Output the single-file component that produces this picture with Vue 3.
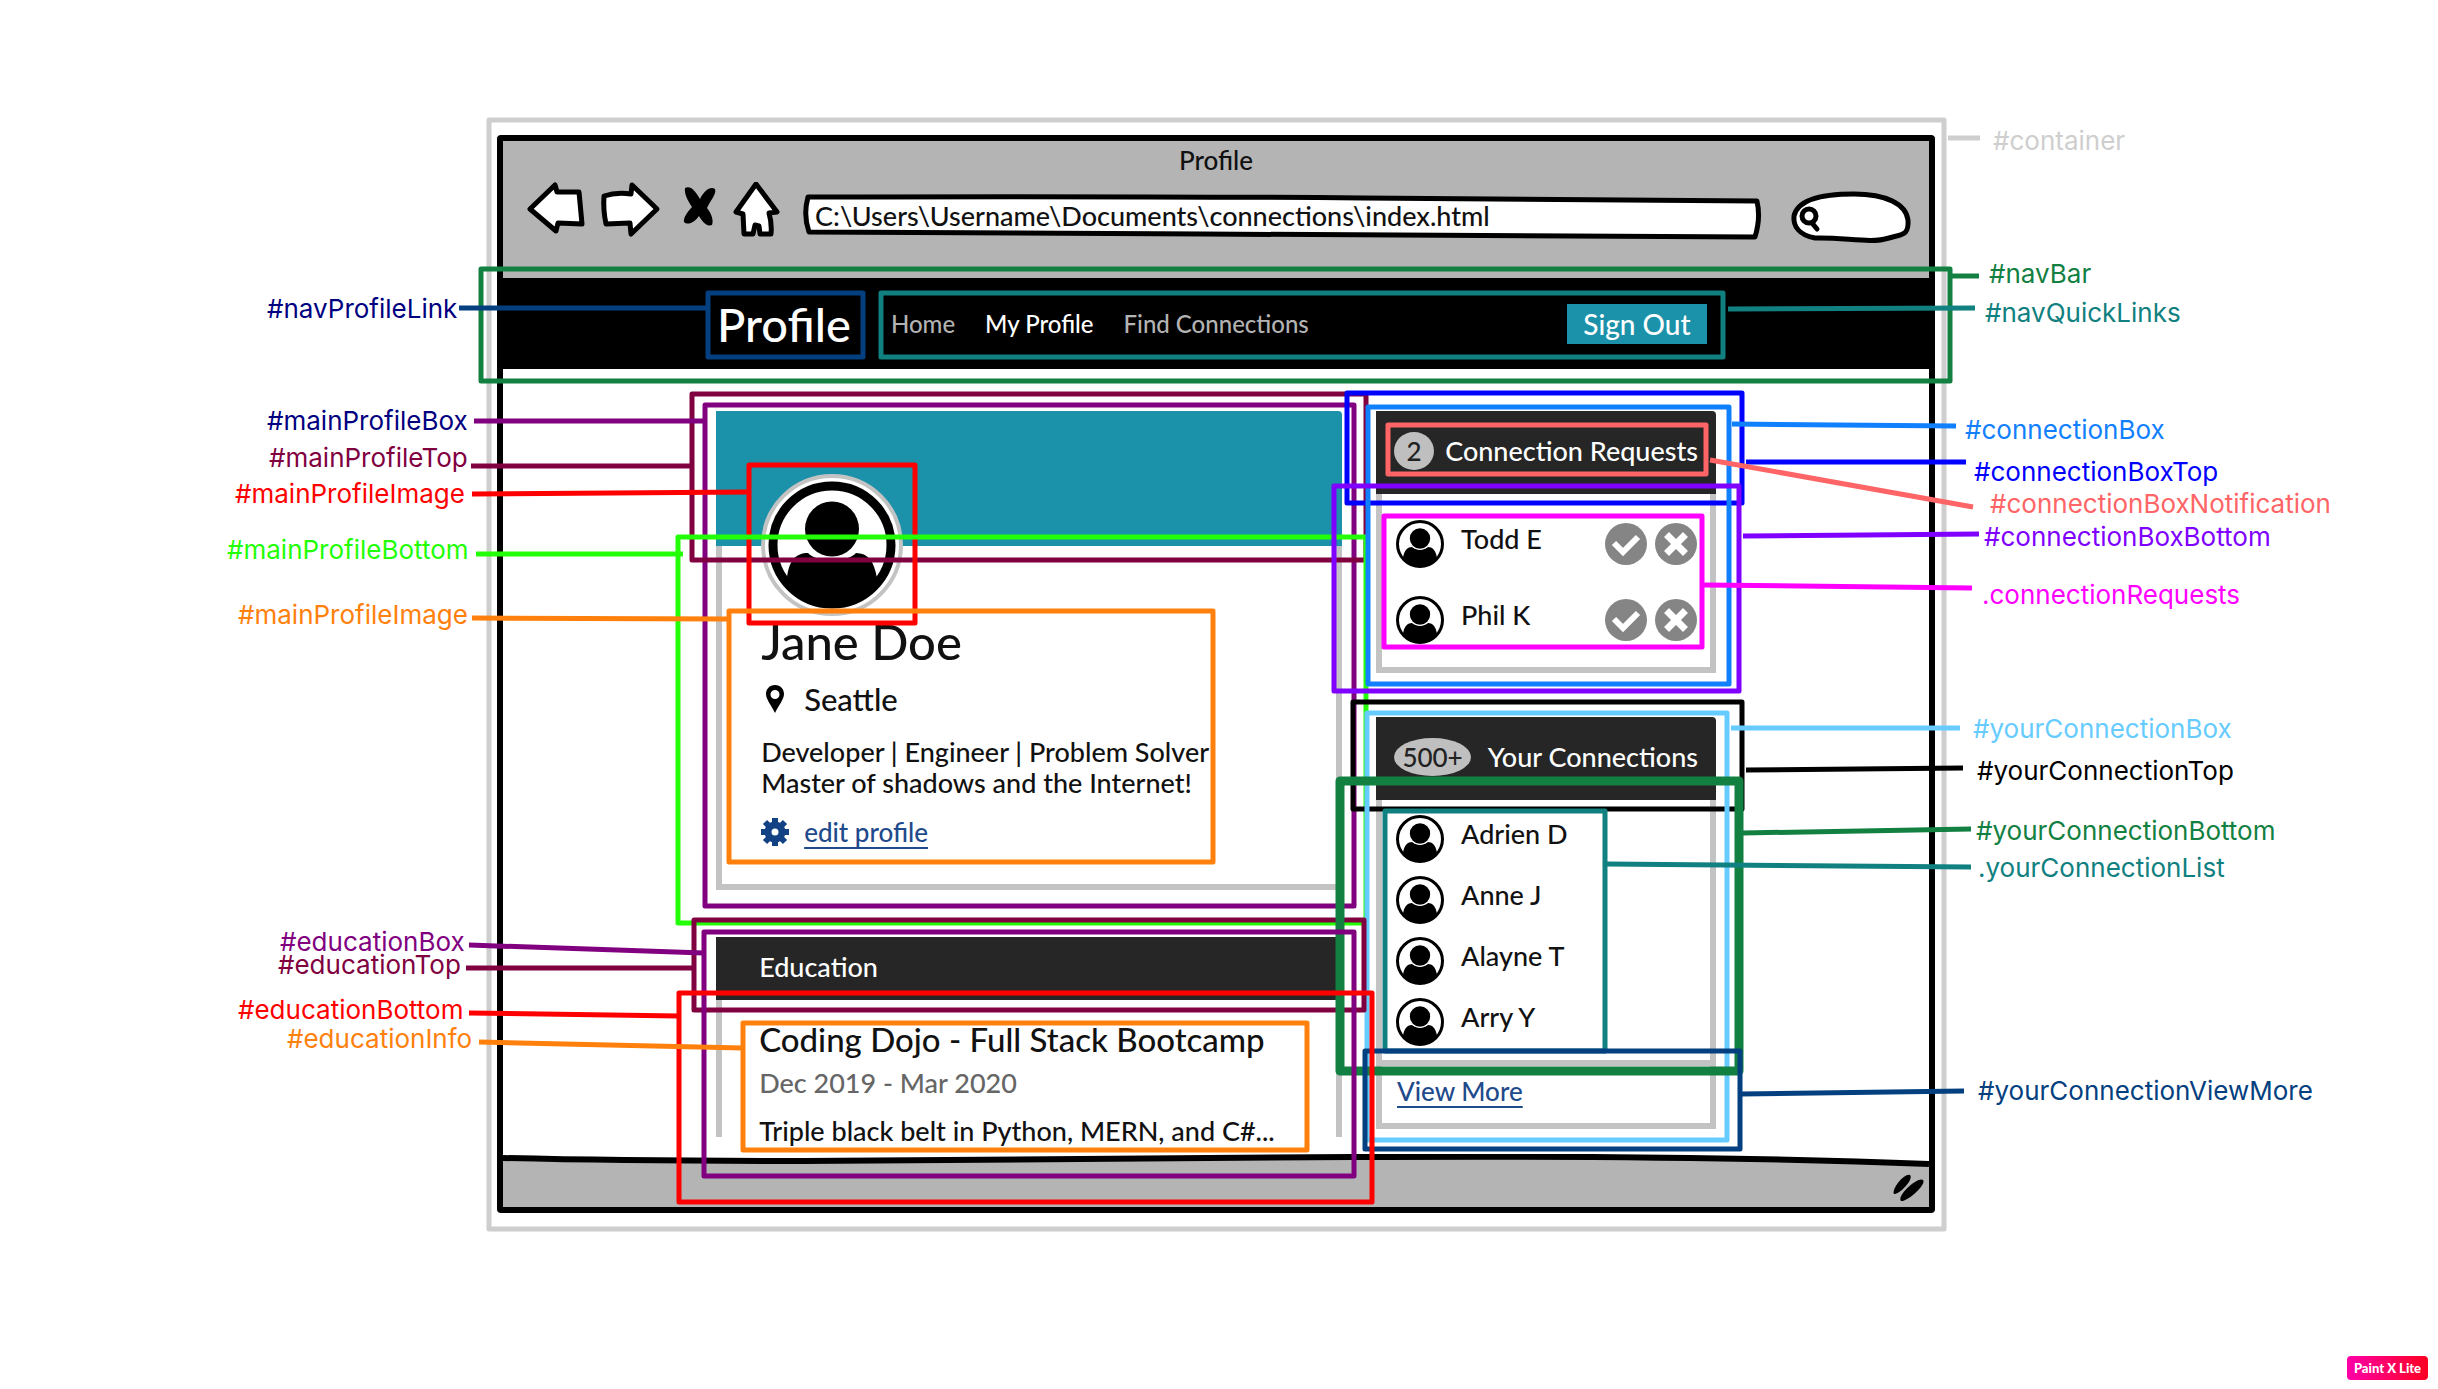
<script setup>
const canvasWidth = 2438
const pct = (x) => `${(x / canvasWidth) * 100}%`

const requests = ['Todd E', 'Phil K']
const connections = ['Adrien D', 'Anne J', 'Alayne T', 'Arry Y']

// Outlines around page regions: left, top, right, bottom in canvas units.
const outlines = [
  { id: 'container', color: '#cecece', box: [489, 120, 1944, 1229] },
  { id: 'navBar', color: '#128041', box: [481, 269, 1950, 381] },
  { id: 'navProfileLink', color: '#043f80', box: [708, 293, 863, 357] },
  { id: 'navQuickLinks', color: '#108080', box: [881, 293, 1723, 357] },
  { id: 'mainProfileBox', color: '#800080', box: [705, 405, 1354, 906] },
  { id: 'mainProfileTop', color: '#800040', box: [692, 394, 1366, 560] },
  { id: 'mainProfileImage', color: '#ff0000', box: [749, 465, 915, 623] },
  { id: 'mainProfileBottom', color: '#22ff06', box: [678, 537, 1366, 923] },
  { id: 'mainProfileInfo', color: '#ff800c', box: [729, 611, 1213, 862] },
  { id: 'connectionBoxTop', color: '#0000ff', box: [1347, 393, 1742, 503] },
  { id: 'connectionBox', color: '#1080ff', box: [1368, 407, 1729, 684] },
  { id: 'connectionBoxNotification', color: '#ff6466', box: [1388, 425, 1706, 474] },
  { id: 'connectionBoxBottom', color: '#8000ff', box: [1334, 486, 1739, 691] },
  { id: 'connectionRequests', color: '#ff00ff', box: [1384, 516, 1702, 647] },
  { id: 'yourConnectionTop', color: '#000000', box: [1353, 702, 1742, 809] },
  { id: 'yourConnectionBox', color: '#66ccff', box: [1367, 713, 1727, 1140] },
  { id: 'educationTop', color: '#800040', box: [694, 920, 1364, 1010] },
  { id: 'yourConnectionBottom', color: '#128041', box: [1340, 781, 1739, 1071], width: 9 },
  { id: 'yourConnectionList', color: '#108080', box: [1385, 811, 1605, 1051] },
  { id: 'yourConnectionViewMore', color: '#043f80', box: [1365, 1051, 1740, 1149] },
  { id: 'educationBox', color: '#800080', box: [704, 932, 1354, 1176] },
  { id: 'educationBottom', color: '#ff0000', box: [679, 993, 1372, 1202] },
  { id: 'educationInfo', color: '#ff800c', box: [743, 1023, 1307, 1150] },
]

// Label text with its anchor and the leader line that ties it to an outline.
const callouts = [
  { text: '#navProfileLink', color: '#000080', line: '#043f80', at: [267, 298], from: [459, 308], to: [706, 308] },
  { text: '#mainProfileBox', color: '#000080', line: '#800080', at: [267, 410], from: [474, 421], to: [705, 421] },
  { text: '#mainProfileTop', color: '#800040', at: [269, 447], from: [471, 466], to: [692, 466] },
  { text: '#mainProfileImage', color: '#ff0000', at: [235, 483], from: [472, 494], to: [749, 492] },
  { text: '#mainProfileBottom', color: '#22ff06', at: [227, 539], from: [476, 554], to: [683, 554] },
  { text: '#mainProfileImage', color: '#ff800c', at: [238, 604], from: [472, 618], to: [729, 619] },
  { text: '#educationBox', color: '#800080', at: [280, 931], from: [469, 945], to: [704, 953] },
  { text: '#educationTop', color: '#800040', at: [278, 954], from: [466, 968], to: [694, 968] },
  { text: '#educationBottom', color: '#ff0000', at: [238, 999], from: [469, 1013], to: [679, 1016] },
  { text: '#educationInfo', color: '#ff800c', at: [287, 1028], from: [479, 1042], to: [743, 1048] },
  { text: '#container', color: '#cecece', at: [1993, 130], from: [1948, 138], to: [1980, 138] },
  { text: '#navBar', color: '#128041', at: [1989, 263], from: [1950, 276], to: [1979, 276] },
  { text: '#navQuickLinks', color: '#108080', at: [1985, 302], from: [1728, 309], to: [1975, 308] },
  { text: '#connectionBox', color: '#1080ff', at: [1965, 419], from: [1732, 424], to: [1956, 426] },
  { text: '#connectionBoxTop', color: '#0000ff', at: [1974, 461], from: [1746, 462], to: [1966, 462] },
  { text: '#connectionBoxNotification', color: '#ff6466', at: [1990, 493], from: [1710, 460], to: [1973, 507] },
  { text: '#connectionBoxBottom', color: '#8000ff', at: [1984, 526], from: [1743, 536], to: [1979, 534] },
  { text: '.connectionRequests', color: '#ff00ff', at: [1982, 584], from: [1704, 585], to: [1972, 588] },
  { text: '#yourConnectionBox', color: '#66ccff', at: [1973, 718], from: [1731, 728], to: [1960, 728] },
  { text: '#yourConnectionTop', color: '#000000', at: [1977, 760], from: [1746, 770], to: [1963, 768] },
  { text: '#yourConnectionBottom', color: '#128041', at: [1976, 820], from: [1743, 833], to: [1971, 829] },
  { text: '.yourConnectionList', color: '#108080', at: [1978, 857], from: [1607, 864], to: [1971, 867] },
  { text: '#yourConnectionViewMore', color: '#043f80', at: [1978, 1080], from: [1741, 1094], to: [1964, 1091] },
]
</script>

<template>
  <div class="stage">
    <svg class="defs" aria-hidden="true">
      <symbol id="person" viewBox="0 0 48 48">
        <circle cx="24" cy="24" r="22.5" fill="#fff" stroke="#000" stroke-width="3" />
        <path d="M7 38C8 30 12 27 16 27C19 30 29 30 32 27C36 27 40 30 41 38C36 44 30 46 24 46C18 46 12 44 7 38Z" />
        <circle cx="24" cy="18.500" r="10.800" stroke="#fff" stroke-width="1.200" />
      </symbol>
    </svg>

    <main class="browser">
      <header class="toolbar">
        <div class="title">Profile</div>
        <div class="controls">
          <button class="tool" type="button" aria-label="Back">
            <svg width="66" height="60" viewBox="525 182 66 60">
              <path class="sketch" d="M530 209L555 185L557 192L579 192L582 224L558 223L556 231Z" />
            </svg>
          </button>
          <button class="tool" type="button" aria-label="Forward">
            <svg width="66" height="60" viewBox="599 182 66 60">
              <path class="sketch" d="M604 196Q616 192 631 194L632 185L657 209L631 234L630 223L606 224Q603 210 604 196Z" />
            </svg>
          </button>
          <button class="tool" type="button" aria-label="Stop">
            <svg width="52" height="60" viewBox="673 182 52 60">
              <path d="M685 188C690 185 695 190 700 199C704 191 710 186 715 189C717 194 710 201 707 208C711 213 714 220 712 225C706 227 702 221 699 216C695 222 688 226 684 222C683 218 688 211 692 207C688 201 684 194 685 188Z" />
            </svg>
          </button>
          <button class="tool" type="button" aria-label="Home">
            <svg width="48" height="60" viewBox="733 182 48 60">
              <path class="sketch" d="M756 184L777 212L769 213Q772 223 771 234L760 234L759 226L755 225L753 234L744 234L743 214L736 212Z" />
            </svg>
          </button>
          <div class="address">
            <svg class="field-frame" viewBox="0 0 960 48" preserveAspectRatio="none" aria-hidden="true">
              <path class="sketch" d="M5 4Q330 3 560 5Q780 6 954 8Q958 25 952 44Q600 43 400 41Q180 40 6 39Q0 22 5 4Z" />
            </svg>
            <input class="address-input" type="text" aria-label="Address" value="C:\Users\Username\Documents\connections\index.html" />
          </div>
          <div class="search">
            <svg class="field-frame" viewBox="0 0 123 54" aria-hidden="true">
              <path class="sketch" d="M25 48C9 45 3 36 4 26C8 8 38 4 64 4C96 4 116 14 118 30C119 46 112 44 99 48C80 54 55 47 25 48Z" />
              <ellipse cx="19" cy="26" rx="7" ry="7" fill="#fff" stroke="#000" stroke-width="5" />
              <path d="M22 33L27 39" stroke="#000" stroke-width="5" stroke-linecap="round" />
            </svg>
            <input class="search-input" type="text" aria-label="Search" />
          </div>
        </div>
      </header>

      <nav class="navbar">
        <a class="brand" href="#">Profile</a>
        <a class="nav-link" href="#">Home</a>
        <a class="nav-link active" href="#">My Profile</a>
        <a class="nav-link" href="#">Find Connections</a>
        <button class="sign-out" type="button">Sign Out</button>
      </nav>

      <div class="columns">
        <div class="primary">
          <section class="profile">
            <div class="banner"></div>
            <div class="profile-body">
              <div class="portrait">
                <svg width="142" height="142" viewBox="0 0 142 142" role="img" aria-label="Jane Doe">
                  <circle cx="71" cy="71" r="69" fill="#fff" stroke="#c3c3c3" stroke-width="4" />
                  <circle cx="71" cy="71" r="59" fill="#fff" stroke="#000" stroke-width="9" />
                  <path d="M26 104C28 86 35 79 47 79C56 89 86 89 95 79C107 79 113 87 116 104C106 123 90 133 71 133C52 133 36 123 26 104Z" />
                  <ellipse cx="71" cy="55" rx="27" ry="27.500" />
                </svg>
              </div>
              <h1 class="name">Jane Doe</h1>
              <p class="place">
                <svg class="lead-icon" width="28" height="28" viewBox="0 0 28 28" aria-hidden="true">
                  <path fill-rule="evenodd" d="M14 0C8.500 0 5 4 5 9C5 14 10 20 14 28C18 20 23 14 23 9C23 4 19.500 0 14 0ZM14 5A4.500 4.500 0 1 1 14 14A4.500 4.500 0 1 1 14 5Z" />
                </svg>
                <span>Seattle</span>
              </p>
              <p class="bio">Developer | Engineer | Problem Solver<br />Master of shadows and the Internet!</p>
              <p class="edit">
                <svg class="lead-icon" width="28" height="28" viewBox="0 0 28 28" aria-hidden="true">
                  <g fill="none" stroke="#134284">
                    <circle cx="14" cy="14" r="7" stroke-width="7" />
                    <path d="M14 0V5M14 23V28M0 14H5M23 14H28M4 4L8 8M20 20L24 24M24 4L20 8M8 20L4 24" stroke-width="6" />
                  </g>
                </svg>
                <a class="link" href="#">edit profile</a>
              </p>
            </div>
          </section>

          <section class="education">
            <h2 class="bar education-bar">Education</h2>
            <div class="education-body">
              <h3 class="school">Coding Dojo - Full Stack Bootcamp</h3>
              <p class="dates">Dec 2019 - Mar 2020</p>
              <p class="details">Triple black belt in Python, MERN, and C#...</p>
            </div>
          </section>
        </div>

        <aside class="secondary">
          <section>
            <h2 class="bar side-bar"><span class="count">2</span><span>Connection Requests</span></h2>
            <ul class="panel requests">
              <li v-for="name in requests" :key="name" class="person">
                <svg class="avatar" width="48" height="48" aria-hidden="true"><use href="#person" /></svg>
                <span class="person-name">{{ name }}</span>
                <button class="round" type="button" :aria-label="`Accept ${name}`">
                  <svg width="42" height="42" viewBox="0 0 42 42">
                    <circle cx="21" cy="21" r="21" fill="#858585" />
                    <path d="M9 20L18 29L33 14" fill="none" stroke="#fff" stroke-width="6" />
                  </svg>
                </button>
                <button class="round" type="button" :aria-label="`Decline ${name}`">
                  <svg width="42" height="42" viewBox="0 0 42 42">
                    <circle cx="21" cy="21" r="21" fill="#858585" />
                    <path d="M14 14L28 28M28 14L14 28" fill="none" stroke="#fff" stroke-width="7" stroke-linecap="square" />
                  </svg>
                </button>
              </li>
            </ul>
          </section>

          <section>
            <h2 class="bar side-bar"><span class="count wide">500+</span><span>Your Connections</span></h2>
            <div class="panel connections">
              <ul class="connection-list">
                <li v-for="name in connections" :key="name" class="person">
                  <svg class="avatar" width="48" height="48" aria-hidden="true"><use href="#person" /></svg>
                  <span class="person-name">{{ name }}</span>
                </li>
              </ul>
              <div class="more"><a class="link" href="#">View More</a></div>
            </div>
          </section>
        </aside>
      </div>

      <footer class="statusbar">
        <svg class="status-edge" viewBox="0 0 1426 14" preserveAspectRatio="none" aria-hidden="true">
          <path d="M0 4Q120 7 300 7Q600 6 850 3Q1200 1 1426 10V14H0Z" fill="#b4b4b4" />
          <path d="M0 4Q120 7 300 7Q600 6 850 3Q1200 1 1426 10" fill="none" stroke="#000" stroke-width="6" vector-effect="non-scaling-stroke" />
        </svg>
        <svg class="grip" width="34" height="36" viewBox="0 0 34 36" aria-hidden="true">
          <path d="M2 23C-1 18 13 1 18 4C22 8 8 23 2 23Z" />
          <path d="M9 30C4 25 26 5 31 9C35 13 15 31 9 30Z" />
        </svg>
      </footer>
    </main>

    <svg class="overlay" aria-hidden="true">
      <rect
        v-for="o in outlines"
        :key="o.id"
        :x="pct(o.box[0])"
        :y="o.box[1]"
        :width="pct(o.box[2] - o.box[0])"
        :height="o.box[3] - o.box[1]"
        :stroke="o.color"
        :stroke-width="o.width || 5"
        stroke-linejoin="round"
        fill="none"
      />
      <line
        v-for="(c, i) in callouts"
        :key="i"
        :x1="pct(c.from[0])"
        :y1="c.from[1]"
        :x2="pct(c.to[0])"
        :y2="c.to[1]"
        :stroke="c.line || c.color"
        stroke-width="5"
      />
    </svg>
    <span
      v-for="(c, i) in callouts"
      :key="i"
      class="callout"
      :style="{ left: pct(c.at[0]), top: `${c.at[1]}px`, color: c.color }"
    >{{ c.text }}</span>

    <div class="badge">Paint X Lite</div>
  </div>
</template>

<style>
body {
  background: #fff;
}
</style>

<style scoped>
.stage {
  position: relative;
  box-sizing: border-box;
  min-height: 100vh;
  padding: 135px 0 170px;
  overflow: hidden;
  background: #fff;
  color: #111;
  font-family: Lato, "Open Sans", sans-serif;
  font-size: 26px;
  font-weight: 500;
  line-height: 32px;
}

.defs {
  position: absolute;
  width: 0;
  height: 0;
}

h1,
h2,
h3,
p,
ul {
  margin: 0;
  padding: 0;
  font-weight: 500;
  list-style: none;
}

svg {
  display: block;
}

button,
input {
  padding: 0;
  border: 0;
  background: none;
  color: inherit;
  font: inherit;
}

.browser {
  margin: 0 20.63% 0 20.39%;
  border: 6px solid #000;
  border-radius: 4px;
}

.sketch {
  fill: #fff;
  stroke: #000;
  stroke-width: 5px;
  stroke-linejoin: round;
  vector-effect: non-scaling-stroke;
}

.toolbar {
  padding: 3px 0 36px;
  background: #b4b4b4;
}

.title {
  text-align: center;
}

.controls {
  display: flex;
  align-items: center;
  gap: 8px;
  height: 60px;
  padding: 6px 16px 0 22px;
}

.address {
  position: relative;
  flex: 1;
  height: 48px;
  margin: 10px 0 0 14px;
}

.search {
  position: relative;
  width: 123px;
  height: 54px;
  margin: 10px 0 0 19px;
}

.field-frame {
  position: absolute;
  inset: 0;
  width: 100%;
  height: 100%;
}

.address-input,
.search-input {
  position: relative;
  box-sizing: border-box;
  width: 100%;
  height: 100%;
  padding: 0 12px 4px;
  font-size: 27px;
}

.search-input {
  padding-left: 34px;
}

.navbar {
  display: flex;
  align-items: center;
  gap: 30px;
  height: 91px;
  padding: 0 15.6% 0 15%;
  background: #000;
}

.brand {
  margin-right: 10px;
  color: #fff;
  font-size: 47px;
  line-height: 56px;
  text-decoration: none;
}

.nav-link {
  color: #b3b3b3;
  font-size: 24px;
  text-decoration: none;
}

.nav-link.active {
  color: #fff;
}

.sign-out {
  height: 40px;
  margin-left: auto;
  padding: 0 16px;
  background: #1b91aa;
  color: #fff;
  font-size: 28px;
}

.columns {
  display: grid;
  grid-template-columns: 626fr 340fr;
  gap: 34px;
  padding: 42px 14.94% 0;
}

.banner {
  height: 135px;
  border-radius: 0 4px 0 0;
  background: #1b91aa;
}

.profile-body {
  display: flow-root;
  padding: 0 39px 36px;
  border: 6px solid #c3c3c3;
  border-top: 0;
}

.portrait {
  margin-top: -72px;
}

.name {
  font-size: 49px;
  line-height: 50px;
}

.place,
.edit {
  display: flex;
  align-items: center;
  gap: 15px;
}

.place {
  margin-top: 15px;
  font-size: 31px;
  line-height: 36px;
}

.bio {
  margin-top: 19px;
  font-size: 27px;
  line-height: 31px;
}

.edit {
  margin-top: 18px;
}

.link {
  color: #1f4a8c;
  text-decoration: underline;
  text-decoration-thickness: 2px;
  text-underline-offset: 5px;
}

.education {
  margin-top: 47px;
}

.bar {
  display: flex;
  align-items: center;
  box-sizing: border-box;
  border-radius: 0 4px 0 0;
  background: #262626;
  color: #fff;
  font-size: 27px;
}

.education-bar {
  height: 63px;
  padding: 0 43px 4px;
}

.education-body {
  padding: 20px 43px 7px;
  background:
    linear-gradient(#c3c3c3, #c3c3c3) 0 0 / 6px calc(100% - 17px) no-repeat,
    linear-gradient(#c3c3c3, #c3c3c3) 100% 0 / 6px calc(100% - 17px) no-repeat;
}

.school {
  font-size: 33px;
  line-height: 38px;
}

.dates {
  margin-top: 9px;
  color: #666;
  font-size: 27px;
}

.details {
  margin-top: 16px;
  font-size: 27px;
}

.secondary {
  display: flex;
  flex-direction: column;
  gap: 44px;
}

.side-bar {
  justify-content: space-between;
  height: 83px;
  padding: 0 18px 4px;
}

.count {
  width: 40px;
  border-radius: 50%;
  background: #bfbfbf;
  color: #222;
  font-size: 26px;
  line-height: 38px;
  text-align: center;
}

.count.wide {
  width: 77px;
}

.panel {
  border: 6px solid #c3c3c3;
  border-top: 0;
}

.requests,
.connection-list {
  display: flex;
  flex-direction: column;
}

.requests {
  gap: 28px;
  padding: 26px 13px 23px 14px;
}

.connection-list {
  gap: 13px;
  padding: 15px 14px 14px;
  border-bottom: 6px solid #c3c3c3;
}

.person {
  display: flex;
  align-items: center;
  gap: 8px;
}

.person-name {
  flex: 1;
  padding: 0 0 10px 9px;
  font-size: 27px;
}

.round {
  border-radius: 50%;
}

.more {
  padding: 9px 15px 16px;
}

.statusbar {
  position: relative;
  height: 53px;
  background: linear-gradient(#fff 10px, #b4b4b4 10px);
}

.status-edge {
  width: 100%;
  height: 14px;
}

.grip {
  position: absolute;
  right: 3px;
  bottom: 0;
}

.overlay {
  position: absolute;
  inset: 0;
  width: 100%;
  height: 100%;
  pointer-events: none;
}

.callout {
  position: absolute;
  font-family: Inter, "Liberation Sans", sans-serif;
  font-size: 26px;
  font-weight: 400;
  line-height: 22px;
  white-space: nowrap;
}

.badge {
  position: absolute;
  right: 10px;
  bottom: 9px;
  width: 81px;
  border-radius: 4px;
  background: linear-gradient(90deg, #ff00a8, #fb0022);
  color: #fff;
  font-size: 13px;
  font-weight: 900;
  line-height: 24px;
  text-align: center;
}
</style>
